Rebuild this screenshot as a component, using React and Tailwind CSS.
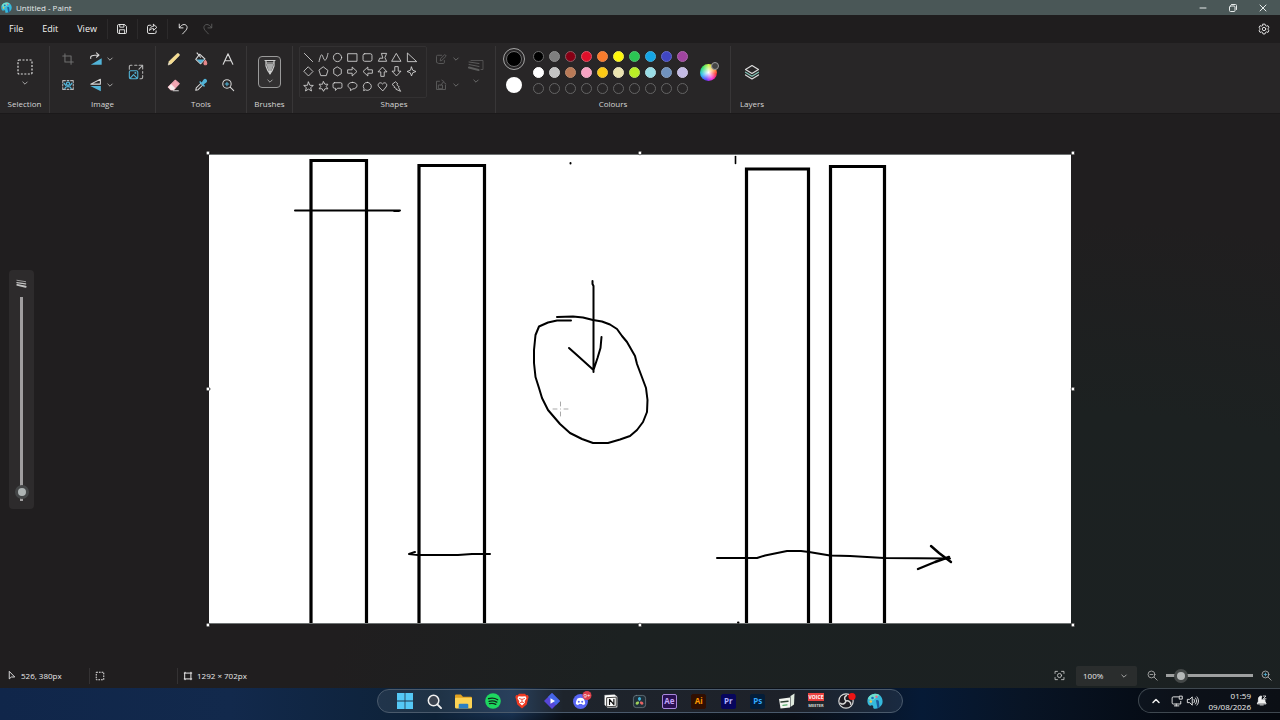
import { useState } from 'react';

const Icon = ({ size = 'size-[14px]', box = 16, className = '', children }) => (
  <svg
    viewBox={`0 0 ${box} ${box}`}
    className={`${size} shrink-0 overflow-visible ${className}`}
    fill="none"
    stroke="currentColor"
    strokeWidth="1.2"
    strokeLinecap="round"
    strokeLinejoin="round"
    aria-hidden="true"
  >
    {children}
  </svg>
);

const Chevron = ({ className = 'text-[#a5a5a5]' }) => (
  <Icon size="size-2" box={8} className={className}>
    <path d="M1.8 3 L4 5.2 L6.2 3" strokeWidth="1" />
  </Icon>
);

const PaintLogo = ({ size }) => (
  <Icon size={size}>
    <g stroke="none">
      <path d="M8 .8C3.6 1 .2 4.4.4 8.600c.2 3.400 2 4.600 3.600 3.800 1.400-.7 2.400.2 2.200 1.600-.2 1.400.8 1.900 2.200 1.700 4.200-.6 7.200-3.500 7.200-7.300C15.600 3.700 12.200.7 8 .8z" fill="#35b9dc" />
      <path d="M8 .8C4.500.9 1.800 2.800.8 6l5.200 1.500L12.500 2A8 8 0 0 0 8 .8z" fill="#6fe0cf" />
      <circle cx="3.800" cy="8.500" r="1.300" fill="#f4c64e" />
      <circle cx="5.500" cy="5" r="1.300" fill="#1b6fc0" />
      <circle cx="9.500" cy="3.800" r="1.200" fill="#e46c8b" />
      <path d="M9 7.500c1.500-1 3 0 3 1.500l.5 5.500-2 1z" fill="#1d5f9e" />
    </g>
  </Icon>
);

/* ---------- title bar + menu ---------- */

const TitleBar = () => (
  <header className="flex h-[15px] items-center bg-[#4a5757] pl-px text-[8px] text-[#e6eaea]">
    <PaintLogo size="size-[11px]" />
    <span className="ml-1">Untitled - Paint</span>
    <div className="ml-auto flex items-center gap-[18px] pr-[11px]">
      <button aria-label="Minimise">
        <Icon size="size-3" box={12}><path d="M3 6h6" strokeWidth="1" /></Icon>
      </button>
      <button aria-label="Restore">
        <Icon size="size-3" box={12}>
          <rect x="2.500" y="4" width="5.500" height="5.500" rx="1" strokeWidth="1" />
          <path d="M4.500 2.500h4a1 1 0 0 1 1 1v4" strokeWidth="1" />
        </Icon>
      </button>
      <button aria-label="Close">
        <Icon size="size-3" box={12}><path d="M3 3l6 6M9 3l-6 6" strokeWidth="1" /></Icon>
      </button>
    </div>
  </header>
);

const MenuBar = () => (
  <nav className="flex h-7 items-center bg-[#1f1d1e] text-[9px] text-[#f2f2f2]">
    <div className="flex gap-[19px] pl-[9px]">
      <button>File</button>
      <button>Edit</button>
      <button>View</button>
    </div>
    <div className="ml-[10px] flex items-center">
      <button aria-label="Save" className="flex h-5 w-[30px] items-center justify-center border-l border-[#2c2a2b]">
        <Icon size="size-3">
          <path d="M2 3.500A1.500 1.500 0 0 1 3.500 2h8L14 4.500v8a1.500 1.500 0 0 1-1.500 1.500h-9A1.500 1.500 0 0 1 2 12.500z" />
          <path d="M5 2v3.500h5.500V2M4.500 14V9h7v5" />
        </Icon>
      </button>
      <button aria-label="Share" className="flex h-5 w-[30px] items-center justify-center border-l border-[#2c2a2b]">
        <Icon size="size-3">
          <path d="M6.500 3H4a2 2 0 0 0-2 2v7a2 2 0 0 0 2 2h7.500a2 2 0 0 0 2-2v-1.500" />
          <path d="M10 1.800L14.500 5.800 10 9.800V7.500C7.500 7.300 6 8.300 4.800 10 5 6.500 7 4.300 10 4.200z" />
        </Icon>
      </button>
      <button aria-label="Undo" className="flex h-5 w-[31px] items-center justify-center border-l border-[#2c2a2b]">
        <Icon size="size-3">
          <path d="M3 1.500V6.500H8M3.300 6.200C5 3.800 7 2 9.500 2c2.500 0 4 2 4 4 0 3-3 5-6 8.500" />
        </Icon>
      </button>
      <button aria-label="Redo" className="flex h-5 w-5 items-center justify-center text-[#5c5c5c]">
        <Icon size="size-3">
          <path d="M13 1.500V6.500H8M12.700 6.200C11 3.800 9 2 6.500 2c-2.500 0-4 2-4 4 0 3 3 5 6 8.500" />
        </Icon>
      </button>
    </div>
    <button aria-label="Settings" className="mr-[10px] ml-auto">
      <Icon size="size-3">
        <path d="M6.600 1.500h2.800l.5 1.900 1.500.8 1.900-.6 1.400 2.400-1.400 1.300v1.500l1.400 1.300-1.400 2.400-1.900-.6-1.500.8-.5 1.900H6.600l-.5-1.900-1.500-.8-1.900.6-1.400-2.400 1.400-1.300V7.300L1.300 6l1.400-2.400 1.900.6 1.500-.8z" />
        <circle cx="8" cy="8" r="2.300" />
      </Icon>
    </button>
  </nav>
);

/* ---------- ribbon ---------- */

const Group = ({ label, children }) => (
  <section aria-label={label} className="border-r border-[#383637] last:border-r-0">
    <div className="flex h-[52px] items-center justify-center">{children}</div>
    <h2 className="h-3 text-center text-[8px] leading-3 text-[#d6d6d6]">{label}</h2>
  </section>
);

const BLUE = '#52b4d8';

const ImageTools = () => (
  <div className="flex items-center gap-[14px] px-[11px]">
    <div className="flex flex-col gap-3">
      <button aria-label="Crop" className="text-[#6f6f6f]">
        <Icon><path d="M4.500 2v9.500H14M2 4.500h9.500V14" /></Icon>
      </button>
      <button aria-label="Remove background" className="text-[#b9b9b9]">
        <Icon>
          <path d="M2 5V3h3M11 3h3v2M14 11v2h-3M5 13H2v-2M7 3h2M7 13h2M2 7v2M14 7v2" />
          <circle cx="8" cy="6.500" r="1.800" stroke={BLUE} strokeWidth="1.500" />
          <path d="M4.500 12c.5-3 6.500-3 7 0M3.500 6l2 2.500M12.500 6l-2 2.500" stroke={BLUE} strokeWidth="1.500" />
        </Icon>
      </button>
    </div>
    <div className="flex flex-col gap-3">
      <button aria-label="Rotate" className="flex items-center gap-[3px]">
        <Icon className="text-[#d8d8d8]">
          <path d="M2 7.500C1 4.500 4 3.500 11 3.500M8.500 1l3 2.500-3 2.500" />
          <path d="M2 14.500h12.500V7z" fill={BLUE} stroke="none" />
        </Icon>
        <Chevron />
      </button>
      <button aria-label="Flip" className="flex items-center gap-[3px]">
        <Icon className="text-[#d8d8d8]">
          <path d="M13 1.500L2 7h11z" />
          <path d="M1.500 9H13.500V15z" fill={BLUE} stroke="none" />
        </Icon>
        <Chevron />
      </button>
    </div>
    <button aria-label="Resize" className="text-[#b5b5b5]">
      <Icon size="size-4" box={18}>
        <path d="M1.500 6V3a1.500 1.500 0 0 1 1.500-1.500h1.500M7.500 1.500h2.500M12.500 1.500h4v4M16.300 1.700l-4 4M16.500 8.500v2M16.500 13v2a1.500 1.500 0 0 1-1.500 1.500h-1.500" />
        <g stroke={BLUE}>
          <rect x="1.500" y="7.500" width="9.500" height="9" rx="1.500" />
          <path d="M2.500 16l3.700-4 4 4" />
          <circle cx="8.300" cy="10" r=".5" />
        </g>
      </Icon>
    </button>
  </div>
);

const Tools = () => (
  <div className="grid grid-cols-3 gap-x-[13px] gap-y-3 px-[11px] text-[#d8d8d8]">
    <button aria-label="Pencil">
      <Icon>
        <path d="M1.500 14.500l1-3.800L11.500 2c1.500-1.200 3.500.8 2.400 2.300L5 13.300z" fill="#f6dc8e" stroke="#fff1c4" strokeWidth=".6" />
        <path d="M1.500 14.500l.7-2.600 1.800 1.800z" fill="#d8d8d8" stroke="none" />
      </Icon>
    </button>
    <button aria-label="Fill">
      <Icon>
        <path d="M6.500 2.500l6 5.500-5 5.500-5.500-5z" />
        <path d="M3 8.500h9l-4.500 4.500z" fill={BLUE} stroke="none" />
        <path d="M3.500 1l4 5" />
        <path d="M13 9.500c2 2.500 2.300 5 0 5s-2-2.500 0-5z" fill="#e8898c" stroke="#e8898c" />
      </Icon>
    </button>
    <button aria-label="Text">
      <Icon><path d="M2.500 14L8 2l5.500 12M4.500 10h7" strokeWidth="1.300" /></Icon>
    </button>
    <button aria-label="Eraser">
      <Icon>
        <path d="M9.500 2.500l4.500 4-6.500 7h-3l-3-3z" fill="#f3a7b4" stroke="#f3a7b4" />
        <path d="M1.800 10.200l2.900-3 4.500 4.500-2 2H4.800z" fill="#f8ecee" stroke="#f8ecee" strokeWidth=".5" />
        <path d="M7 14.500h6" />
      </Icon>
    </button>
    <button aria-label="Colour picker">
      <Icon>
        <path d="M2 14l.6-2.700L8 6l2 2-5.300 5.300z" />
        <path d="M7 4.500l4.500 4.500M9.500 5.500l2-3c1.500-1.500 3.500.5 2 2l-3 2.300z" fill={BLUE} stroke={BLUE} strokeWidth="1.800" />
      </Icon>
    </button>
    <button aria-label="Magnifier">
      <Icon>
        <circle cx="6.800" cy="6.800" r="4.800" />
        <path d="M10.500 10.500L14.500 14.500" />
        <path d="M4.800 6.800h4M6.800 4.800v4" stroke={BLUE} />
      </Icon>
    </button>
  </div>
);

const shapes = [
  ['Line', <path d="M2 2l12 12" />],
  ['Curve', <path d="M1.500 14C3 8 4 4 5.500 4S8 12 10 12s3.500-5 4.500-10" />],
  ['Oval', <circle cx="8" cy="8" r="6" />],
  ['Rectangle', <rect x="1.500" y="2.500" width="13" height="11" />],
  ['Rounded rectangle', <rect x="1.500" y="2.500" width="13" height="11" rx="2.500" />],
  ['Polygon', <path d="M7 2h7l-2.500 6 2.500 5.500H2L4 9h4z" />],
  ['Triangle', <path d="M8 2.500L14.500 13.500h-13z" />],
  ['Right triangle', <path d="M2 2v12h13z" />],
  ['Diamond', <path d="M8 1.500L14.500 8 8 14.500 1.500 8z" />],
  ['Pentagon', <path d="M8 1.500l6.500 5-2.500 7.500H4L1.500 6.500z" />],
  ['Hexagon', <path d="M8 1.500l5.500 3.300v6.400L8 14.500l-5.500-3.300V4.800z" />],
  ['Right arrow', <path d="M1.500 5.500h6v-4L14.500 8l-7 6.500v-4h-6z" />],
  ['Left arrow', <path d="M14.500 5.500h-6v-4L1.500 8l7 6.500v-4h6z" />],
  ['Up arrow', <path d="M5.500 14.500v-6h-4L8 1.500l6.500 7h-4v6z" />],
  ['Down arrow', <path d="M5.500 1.500v6h-4L8 14.500l6.500-7h-4v-6z" />],
  ['Four-point star', <path d="M8 1.500l1.800 4.700L14.500 8l-4.700 1.800L8 14.500 6.200 9.800 1.500 8l4.700-1.800z" />],
  ['Five-point star', <path d="M8 1.500l2 4.700 5 .3-3.900 3.200 1.300 4.800L8 11.800l-4.400 2.700 1.300-4.800L1 6.500l5-.3z" />],
  ['Six-point star', <path d="M8 1l2 3.700h4.300L12 8l2.300 3.300H10L8 15l-2-3.700H1.700L4 8 1.700 4.700H6z" />],
  ['Rounded callout', <path d="M3.500 2.500h9a2 2 0 0 1 2 2v4a2 2 0 0 1-2 2H8L5 13.800V10.500H3.500a2 2 0 0 1-2-2v-4a2 2 0 0 1 2-2z" />],
  ['Oval callout', <path d="M8 2c4 0 6.500 2 6.500 4.700S12 11.500 8.500 11.500L5 14v-3C3 10.200 1.500 8.800 1.500 6.700 1.500 4 4 2 8 2z" />],
  ['Cloud callout', <path d="M8 2a5.800 5.800 0 1 1-3 10.900L2.300 14l.7-2.800A5.800 5.800 0 0 1 8 2z" />],
  ['Heart', <path d="M8 14L2.500 8.300C-.5 4.500 4.800.2 8 4.300c3.200-4.100 8.500.2 5.500 4z" />],
  ['Lightning', <path d="M6 1.500L1.500 5l3.500 3-.8.800 4 2.700-.7.700 6.500 2.800-3-5.500 1-.7-3.500-3.500 1-.8z" />],
];

const ShapeTools = () => (
  <div className="flex items-center pr-[11px] pl-[6px] text-[#5c5c5c]">
    <div className="h-[52px] w-32 rounded-xs border border-[#333132] pt-[3px] pl-px">
      <div className="grid h-11 w-[118px] grid-cols-8 grid-rows-3 place-items-center text-[#dcdcdc]">
        {shapes.map(([name, path]) => (
          <button key={name} aria-label={name}>
            <Icon size="size-[11px]" className="block">{path}</Icon>
          </button>
        ))}
      </div>
    </div>
    <div className="ml-2 flex flex-col gap-[14px]">
      <button aria-label="Shape outline" className="flex items-center gap-[5px]">
        <Icon size="size-3">
          <path d="M9 3H3.500A1.500 1.500 0 0 0 2 4.500v8L5 14h6a1.500 1.500 0 0 0 1.500-1.500V10M7 10l.5-2.500L13 2l2 2-5.500 5.500z" />
        </Icon>
        <Chevron className="text-[#6a6a6a]" />
      </button>
      <button aria-label="Shape fill" className="flex items-center gap-[5px]">
        <Icon size="size-3">
          <path d="M6 3H2v11h12V8M5 8h5v5H5zM8 8l3-4 3.500 2.500M9 1.500l3 2" />
        </Icon>
        <Chevron className="text-[#6a6a6a]" />
      </button>
    </div>
    <button aria-label="Size" className="ml-2 flex flex-col items-center gap-1 pb-[2px]">
      <Icon size="size-4">
        <path d="M1 5l10 1.500M1 7.500l10 2" strokeWidth="1" />
        <path d="M1 10.500l9.500 2.500" strokeWidth="2.200" />
        <path d="M3 3.500h12v9h-2" strokeWidth=".8" />
      </Icon>
      <Chevron className="text-[#6a6a6a]" />
    </button>
  </div>
);

const swatches = [
  ['Black', 'bg-black border-[#6b6b6b]'],
  ['Grey', 'bg-[#7f7f7f] border-[#8f8f8f]'],
  ['Dark red', 'bg-[#880015] border-[#8d5b62]'],
  ['Red', 'bg-[#e0102a] border-[#d8596a]'],
  ['Orange', 'bg-[#f97c2c] border-[#f08b4c]'],
  ['Yellow', 'bg-[#fff80a] border-[#f0ec50]'],
  ['Green', 'bg-[#2bc653] border-[#52c26e]'],
  ['Turquoise', 'bg-[#14a5e6] border-[#44afdc]'],
  ['Indigo', 'bg-[#4046c4] border-[#666bc8]'],
  ['Purple', 'bg-[#a044a0] border-[#ab68ab]'],
  ['White', 'bg-white border-white'],
  ['Light grey', 'bg-[#c3c3c3] border-[#cfcfcf]'],
  ['Brown', 'bg-[#b97a57] border-[#bf8d70]'],
  ['Rose', 'bg-[#f7a3c3] border-[#f2b3ca]'],
  ['Gold', 'bg-[#fcca14] border-[#f0c848]'],
  ['Light yellow', 'bg-[#ebe4b0] border-[#ebe6c0]'],
  ['Lime', 'bg-[#b9ef25] border-[#bde65a]'],
  ['Light turquoise', 'bg-[#99dde6] border-[#acdee5]'],
  ['Blue grey', 'bg-[#7092be] border-[#8aa2c2]'],
  ['Lavender', 'bg-[#c5bce6] border-[#cfc8e6]'],
];
const emptySlots = [1, 2, 3, 4, 5, 6, 7, 8, 9, 10];

const Colours = () => (
  <div className="flex items-center pr-3 pl-[7px]">
    <div className="flex w-[22px] flex-col items-center gap-[7px] pb-[3px]">
      <button aria-label="Primary colour" className="size-[22px] rounded-full border border-[#a5a5a5] p-[2px]">
        <span className="block size-4 rounded-full border border-[#6b6b6b] bg-black"></span>
      </button>
      <button aria-label="Secondary colour" className="size-4 rounded-full bg-white"></button>
    </div>
    <div className="ml-2 grid grid-cols-10 gap-[5px]">
      {swatches.map(([name, color]) => (
        <button key={name} aria-label={name} className={`size-[11px] rounded-full border ${color}`}></button>
      ))}
      {emptySlots.map((n) => (
        <button key={n} aria-label={`Custom colour ${n}`} className="size-[11px] rounded-full border border-[#646464]"></button>
      ))}
    </div>
    <button aria-label="Edit colours" className="relative ml-3 size-[18px]">
      <span className="block size-[17px] rounded-full bg-[radial-gradient(circle,#fff_0%,transparent_65%),conic-gradient(#c8f04a,#ff9a2a_60deg,#ff3434_100deg,#f02cd8_150deg,#5a3cff_200deg,#22b8f0_250deg,#2fe06a_310deg,#c8f04a)]"></span>
      <span className="absolute -top-[1px] -right-[1px] size-2 rounded-full border border-[#9b9b9b] bg-[#454545]"></span>
    </button>
  </div>
);

const Ribbon = () => (
  <div className="flex h-[71px] border-b border-[#1b191a] bg-[#282627] pt-[3px]">
    <Group label="Selection">
      <button aria-label="Selection" className="flex w-[49px] flex-col items-center gap-1 pt-[2px] text-[#dcdcdc]">
        <Icon size="size-4">
          <rect x="1" y="1" width="14" height="14" rx="1" strokeDasharray="2 1.500" strokeLinecap="butt" />
        </Icon>
        <Chevron />
      </button>
    </Group>
    <Group label="Image"><ImageTools /></Group>
    <Group label="Tools"><Tools /></Group>
    <Group label="Brushes">
      <button aria-label="Brushes" className="mx-[11px] flex h-8 w-[23px] flex-col items-center justify-center gap-[2px] rounded-sm border border-[#9a9a9a] bg-[#323031] text-[#cfcfcf]">
        <Icon size="size-4">
          <path d="M3 1.500h10M4 1.500v5.500l2 5h4l2-5V1.500M4 4h8" />
          <path d="M5 5h6v2L9.300 12H6.700L5 7z" fill="#a8a8a8" stroke="none" />
          <path d="M6.500 12.500L8 15l1.500-2.500z" fill="currentColor" />
        </Icon>
        <Chevron />
      </button>
    </Group>
    <Group label="Shapes"><ShapeTools /></Group>
    <Group label="Colours"><Colours /></Group>
    <Group label="Layers">
      <button aria-label="Layers" className="px-[13px] text-[#dcdcdc]">
        <Icon size="size-4">
          <path d="M8 1.500l6.500 4L8 9.500l-6.500-4z" />
          <path d="M1.500 8.200L8 12.200l6.500-4" stroke="#86c5b8" />
          <path d="M1.500 10.900L8 14.900l6.500-4" />
        </Icon>
      </button>
    </Group>
  </div>
);

/* ---------- drawing area ---------- */

const handles = [
  [-1, -2], [431, -2], [864, -2],
  [-1, 234], [864, 234],
  [-1, 470], [431, 470], [864, 470],
];

const Drawing = () => (
  <svg
    viewBox="0 0 862 468"
    className="w-[862px] max-w-full overflow-visible bg-white"
    fill="none"
    stroke="#000"
    strokeWidth="2"
    strokeLinecap="round"
    strokeLinejoin="round"
    role="img"
    aria-label="Canvas"
  >
    <path d="M0 -.5h862M0 468.500h862" stroke="#6f7373" strokeWidth="1" />
    {/* columns */}
    <g strokeWidth="3.200" strokeLinecap="butt" strokeLinejoin="miter">
      <path d="M102 468V5.500H157.500V468" />
      <path d="M210 468V10.500H275.500V468" />
      <path d="M537.500 468V14H599.500V468" />
      <path d="M621.500 468V11.500H675.500V468" />
    </g>
    <path d="M86 55.500H191M185 56h5" />
    <path d="M200 399l6-2M200 399l9 1h40l14-1H281" />
    <path d="M508 403h40l8-2.500 22-4.500h14l8 1 21 3.500 20 .5 34 2 66 .5" />
    <path d="M722 391l8 7 12 9M740 402l-14 5-17 7" strokeWidth="2.400" />
    {/* blob */}
    <path d="M348 162L364 161.500L374 162.500L384 165L393 166.500L401 169.500L408 174L413 181L418 187L422 194L426 201L428 209L431 217L434 225L437 233L438.500 245L438 257L434 267L428 275L421 281L411 284.500L399 288H384L373 284L361 278L351 269L345 262L339 255L333 243L330 233L326.500 222L325 208L325 195L326.500 180L330 171.500L339 167.500L348 165.500H362" />
    <path d="M383.500 126v3l1 2V217M360 193l9 8 15.500 14 4-12 3-10 1-11" />
    {/* stray marks */}
    <path d="M361.500 8v.5M529 467.500h.5" />
    <path d="M526.500 1.500v7" strokeWidth="1.600" />
    {/* cursor */}
    <path d="M351.500 247v4M351.500 257v4M344 254h4M355 254h4M351.500 254h.1" stroke="#a9a9a9" strokeWidth="1" />
    {handles.map(([x, y]) => (
      <circle key={`${x},${y}`} cx={x} cy={y} r="1.900" fill="#fff" stroke="#111" strokeWidth=".6" />
    ))}
  </svg>
);

const Workspace = () => {
  const [size, setSize] = useState(1);
  return (
    <main className="grid flex-1 grid-cols-[1fr_auto_1fr] items-center pt-[3px]">
      <div className="ml-[9px] flex h-[239px] w-[25px] flex-col items-center rounded-[4px] bg-[#2d2b2c] pt-2">
        <Icon size="size-[11px]" box={12} className="text-[#c2c2c2]">
          <path d="M1 2.500l9.500 1.500" strokeWidth=".8" />
          <path d="M1 5l9.500 1.500" strokeWidth="1.400" />
          <path d="M1.500 7.500l9 2" strokeWidth="2.200" />
        </Icon>
        <input
          type="range"
          aria-label="Brush size"
          min="0"
          max="100"
          value={size}
          onChange={(e) => setSize(e.target.value)}
          className="mt-2 h-[204px] w-[14px] appearance-none bg-[linear-gradient(#a09e9f,#a09e9f)] bg-[length:3px_100%] bg-center bg-no-repeat [direction:rtl] [writing-mode:vertical-lr] [&::-webkit-slider-thumb]:size-[14px] [&::-webkit-slider-thumb]:appearance-none [&::-webkit-slider-thumb]:rounded-full [&::-webkit-slider-thumb]:border-[3px] [&::-webkit-slider-thumb]:border-[#444647] [&::-webkit-slider-thumb]:bg-[#aeb4b4]"
        />
      </div>
      <Drawing />
      <div></div>
    </main>
  );
};

const StatusBar = () => {
  const [zoom, setZoom] = useState(11);
  return (
    <footer className="flex h-[27px] items-center pt-[2px] text-[8px] text-[#e8e8e8]">
      <div className="flex h-4 w-[90px] items-center gap-[5px] border-r border-[#343233] pl-[7px]">
        <Icon size="size-[9px]" box={12}><path d="M3 1v9.500L5.800 8h4z" /></Icon>
        <span>526, 380px</span>
      </div>
      <div className="flex h-4 w-[88px] items-center border-r border-[#343233] pl-[5px]">
        <Icon size="size-[10px]" box={12}>
          <rect x="1.500" y="1.500" width="9" height="9" strokeDasharray="2 1.200" strokeLinecap="butt" />
        </Icon>
      </div>
      <div className="flex items-center gap-1 pl-[5px]">
        <Icon size="size-[10px]" box={12}>
          <rect x="2.500" y="2.500" width="7" height="7" />
          <path d="M1.500 2.500h1v-1M9.500 1.500v1h1M1.500 9.500h1v1M9.500 10.500v-1h1" />
        </Icon>
        <span>1292 × 702px</span>
      </div>

      <div className="ml-auto flex items-center pr-2">
        <button aria-label="Fit to window">
          <Icon size="size-[11px]" className="text-[#cfcfcf]">
            <path d="M1.500 5V2H5M11 2h3.500v3M14.500 11v3H11M5 14H1.500v-3" />
            <circle cx="8" cy="8" r="3" />
          </Icon>
        </button>
        <label className="relative ml-[11px] flex items-center">
          <span className="sr-only">Zoom level</span>
          <select defaultValue="100%" className="h-5 w-[61px] appearance-none rounded-xs bg-[#2a2d2d] px-[7px] py-0 text-[8px] leading-5">
            <option>100%</option>
            <option>200%</option>
          </select>
          <span className="pointer-events-none absolute right-[9px]"><Chevron /></span>
        </label>
        <button aria-label="Zoom out" className="ml-[10px]">
          <Icon size="size-[11px]" className="text-[#b5b5b5]">
            <circle cx="6.500" cy="6.500" r="5" /><path d="M10.300 10.300l4.500 4.500M4.500 6.500h4" />
          </Icon>
        </button>
        <input
          type="range"
          aria-label="Zoom"
          min="0"
          max="100"
          value={zoom}
          onChange={(e) => setZoom(e.target.value)}
          className="mx-2 h-[14px] w-[87px] appearance-none bg-[linear-gradient(#9ea0a0,#9ea0a0)] bg-[length:100%_3px] bg-center bg-no-repeat [&::-webkit-slider-thumb]:size-[14px] [&::-webkit-slider-thumb]:appearance-none [&::-webkit-slider-thumb]:rounded-full [&::-webkit-slider-thumb]:border-[3px] [&::-webkit-slider-thumb]:border-[#444848] [&::-webkit-slider-thumb]:bg-[#b4b8b8]"
        />
        <button aria-label="Zoom in">
          <Icon size="size-[11px]" className="text-[#b5b5b5]">
            <circle cx="6.500" cy="6.500" r="5" /><path d="M10.300 10.300l4.500 4.500" />
            <path d="M4.500 6.500h4M6.500 4.500v4" stroke={BLUE} />
          </Icon>
        </button>
      </div>
    </footer>
  );
};

/* ---------- taskbar ---------- */

const Adobe = ({ text, bg, fg, border }) => (
  <span className={`flex size-[15px] items-center justify-center rounded-[2px] border text-[8px] leading-none font-bold ${bg} ${fg} ${border}`}>
    {text}
  </span>
);

const apps = [
  ['Start', (
    <Icon size="size-4">
      <path d="M0 0h7.600v7.600H0zM8.400 0H16v7.600H8.400zM0 8.400h7.600V16H0zM8.400 8.400H16V16H8.400z" fill="#55c8f5" stroke="none" />
    </Icon>
  )],
  ['Search', (
    <Icon size="size-[15px]">
      <circle cx="7" cy="7" r="5.600" fill="#3c4450" stroke="#f0f0f0" strokeWidth="1.600" />
      <path d="M11 11l4 4" stroke="#f0f0f0" strokeWidth="2" />
    </Icon>
  )],
  ['File Explorer', (
    <Icon size="size-[17px]">
      <g stroke="none">
        <path d="M0 2.500a1 1 0 0 1 1-1h4.500L7.500 3.500H15a1 1 0 0 1 1 1V7H0z" fill="#e0a020" />
        <rect y="4.500" width="16" height="10" rx="1" fill="#fcd354" />
        <path d="M3.500 14.500v-3.500a1 1 0 0 1 1-1h7a1 1 0 0 1 1 1v3.500z" fill="#2b7fc4" />
      </g>
    </Icon>
  )],
  ['Spotify', (
    <Icon size="size-4">
      <circle cx="8" cy="8" r="7.800" fill="#1ed760" stroke="none" />
      <path d="M3.500 5.700c3-.9 6.500-.6 9.200 1M4 8.300c2.700-.8 5.500-.5 7.800.8M4.500 10.700c2.200-.6 4.500-.3 6.300.7" stroke="#10271a" strokeWidth="1.300" />
    </Icon>
  )],
  ['Brave', (
    <Icon size="size-4">
      <path d="M5 .8h6l1.200 1.400 1.600-.1.900 2-.5 1.300-1.500 6L8 15.500l-4.700-4.100-1.500-6-.5-1.300.9-2 1.600.1z" fill="#ee3a22" stroke="none" />
      <path d="M8 3.500l3.500-.3 1 2-1.800 3 .3 1.300L8 12.500 5 9.500l.3-1.300-1.800-3 1-2z" fill="#fff" stroke="none" />
      <path d="M5.500 5.500l1.800.8M10.500 5.500l-1.800.8M8 6v3M6.500 9.500L8 9l1.500.5" stroke="#ee3a22" strokeWidth=".9" />
    </Icon>
  )],
  ['Player', (
    <Icon size="size-4">
      <path d="M8 0l8 8-8 8-8-8z" fill="#5746d8" stroke="none" />
      <path d="M8 0l8 8-4 4L4 4z" fill="#4466e8" stroke="none" />
      <path d="M6.500 5.300v5.400L11 8z" fill="#fff" stroke="none" />
    </Icon>
  )],
  ['Discord', (
    <Icon size="size-4">
      <circle cx="7.500" cy="8.500" r="7.500" fill="#5865f2" stroke="none" />
      <path d="M4.500 5.500c2-.9 4-.9 6 0 1.200 1.800 1.700 3.500 1.600 5.400-.8.6-1.600.9-2.400 1.100l-.6-1.100H5.900L5.300 12c-.8-.2-1.600-.5-2.400-1.100-.1-1.900.4-3.600 1.600-5.400z" fill="#fff" stroke="none" />
      <circle cx="5.800" cy="8.700" r="1" fill="#5865f2" stroke="none" />
      <circle cx="9.200" cy="8.700" r="1" fill="#5865f2" stroke="none" />
      <circle cx="14" cy="2.500" r="4.500" fill="#dc3f4c" stroke="none" />
      <text x="14" y="4.600" textAnchor="middle" fontSize="6" fill="#fff" stroke="none">9+</text>
    </Icon>
  )],
  ['Notion', (
    <Icon size="size-[14px]">
      <path d="M1 1.500L12 .8l3 2.400V15L4 15.500l-3-3z" fill="#fff" stroke="#ddd" strokeWidth=".5" />
      <path d="M3.500 4.200l10.500-.6v10.400l-10.500.6z" fill="#fff" stroke="#222" strokeWidth="1" />
      <path d="M6.300 12V6.200l5 5.800V6" stroke="#111" strokeWidth="1.400" />
    </Icon>
  )],
  ['DaVinci Resolve', (
    <Icon size="size-[13px]">
      <rect x=".5" y=".5" width="15" height="15" rx="3.500" fill="#20303a" stroke="#7b8a92" strokeWidth=".8" />
      <path d="M8 7.500C5.500 6 5.500 3 8 2.500 10.500 3 10.500 6 8 7.500z" fill="#3fb3d8" stroke="none" />
      <path d="M7.500 8.500c0 3-2.500 4.300-4.200 2.700C2.800 8.800 5 7.300 7.500 8.500z" fill="#9fd05a" stroke="none" />
      <path d="M8.500 8.500c0 3 2.500 4.300 4.200 2.700C13.200 8.800 11 7.300 8.500 8.500z" fill="#e86464" stroke="none" />
    </Icon>
  )],
  ['After Effects', <Adobe text="Ae" bg="bg-[#2a1052]" fg="text-[#c3a4f8]" border="border-[#a987dc]" />],
  ['Illustrator', <Adobe text="Ai" bg="bg-[#300f02]" fg="text-[#ff9a00]" border="border-[#300f02]" />],
  ['Premiere Pro', <Adobe text="Pr" bg="bg-[#07065c]" fg="text-[#b3b2ff]" border="border-[#07065c]" />],
  ['Photoshop', <Adobe text="Ps" bg="bg-[#041d38]" fg="text-[#31a8ff]" border="border-[#041d38]" />],
  ['Soundboard', (
    <Icon size="size-4">
      <path d="M0 6l11-1.500v10L1.500 15.500z" fill="#f1f4ef" stroke="none" />
      <path d="M2 9l7-.8" stroke="#2f4334" strokeWidth="1.600" />
      <path d="M4 12.300l4-.5" stroke="#55b06b" strokeWidth="1.300" />
      <path d="M11.500 3l4-2.500-.5 11-3.500 2.500z" fill="#dfe9dd" stroke="none" />
    </Icon>
  )],
  ['Voicemeeter', (
    <Icon size="size-4">
      <rect y="0" width="16" height="8" fill="#e8423f" stroke="none" />
      <rect y="8.500" width="16" height="7" fill="#23282c" stroke="none" />
      <text x="8" y="6" textAnchor="middle" fontSize="5" fontWeight="700" fill="#fff" stroke="none">VOICE</text>
      <text x="8" y="14" textAnchor="middle" fontSize="4" fontWeight="700" fill="#d5d5d5" stroke="none">MEETER</text>
    </Icon>
  )],
  ['OBS Studio', (
    <Icon size="size-4">
      <circle cx="8" cy="8" r="7.200" fill="#1d1b22" stroke="#d9d9d9" />
      <path d="M8 8c-2-2-1.800-4.500.5-5.500M8 8c2.800-.6 5 .9 4.800 3.400M8 8c-.8 2.700-3.200 3.800-5.300 2.300" stroke="#d9d9d9" strokeWidth="1.500" />
      <circle cx="14" cy="3.500" r="3.600" fill="#ee1414" stroke="none" />
    </Icon>
  )],
  ['Paint', <PaintLogo size="size-4" />],
];

const Taskbar = () => (
  <div className="grid h-8 grid-cols-[1fr_auto_1fr] items-start bg-[radial-gradient(ellipse_at_50%_130%,#00000088,transparent_30%),linear-gradient(90deg,#10264a_0%,#12294c_18%,#0d2136_34%,#17304f_40%,#0b121b_44%,#0a0f17_62%,#061a36_72%,#081425_80%,#050a12_92%,#05080e_100%)]">
    <div></div>
    <div className="mt-px grid h-6 w-[526px] grid-cols-17 place-items-center rounded-full border border-[#4a5a6c] bg-[#ffffff14] px-3">
      {apps.map(([name, icon]) => (
        <button key={name} aria-label={name}>{icon}</button>
      ))}
    </div>
    <div className="flex h-[25px] items-center justify-self-end rounded-l-full border border-r-0 border-[#3f4850] bg-[#ffffff08] pr-[13px] pl-3 text-[#f0f0f0]">
      <button aria-label="Show hidden icons">
        <Icon size="size-[10px]" box={10}><path d="M2 6.500l3-3 3 3" strokeWidth="1.500" /></Icon>
      </button>
      <button aria-label="Network" className="ml-[10px]">
        <Icon size="size-3">
          <path d="M10 2.500H3A1.500 1.500 0 0 0 1.500 4v6.500A1.500 1.500 0 0 0 3 12h10V8.500M7 12v2.500M4.500 14.500h6" />
          <rect x="11.500" y="1.500" width="3.500" height="4" />
        </Icon>
      </button>
      <button aria-label="Volume" className="ml-1">
        <Icon size="size-3">
          <path d="M1 5.800h2.500L7 2.500v11L3.500 10.200H1zM9.300 5.800c1 1.300 1 3.100 0 4.400M11.300 4c2 2.400 2 5.600 0 8M13.300 2.500c2.700 3.300 2.700 7.700 0 11" />
        </Icon>
      </button>
      <div className="ml-[10px] text-right text-[8px] leading-[11px]">
        <div>01:59</div>
        <div>09/08/2026</div>
      </div>
      <button aria-label="Notifications" className="ml-[5px]">
        <Icon size="size-[11px]">
          <path d="M2 12.500L3.500 9V6c0-3 2-4.500 4.500-4.500L7.500 7h5.500v2l1.500 3.500z" fill="currentColor" />
          <path d="M6 14.500h4.500M10.500 1.500h4l-4 4h4" />
        </Icon>
      </button>
    </div>
  </div>
);

const App = () => {
  return (
    <div className="flex min-h-screen flex-col bg-[#201e1f] bg-[radial-gradient(ellipse_at_85%_105%,#1b2122_0%,#1c2121_32%,transparent_50%)] font-['Open_Sans','Noto_Sans',sans-serif]">
      <TitleBar />
      <MenuBar />
      <Ribbon />
      <Workspace />
      <StatusBar />
      <Taskbar />
    </div>
  );
};

export default App;
